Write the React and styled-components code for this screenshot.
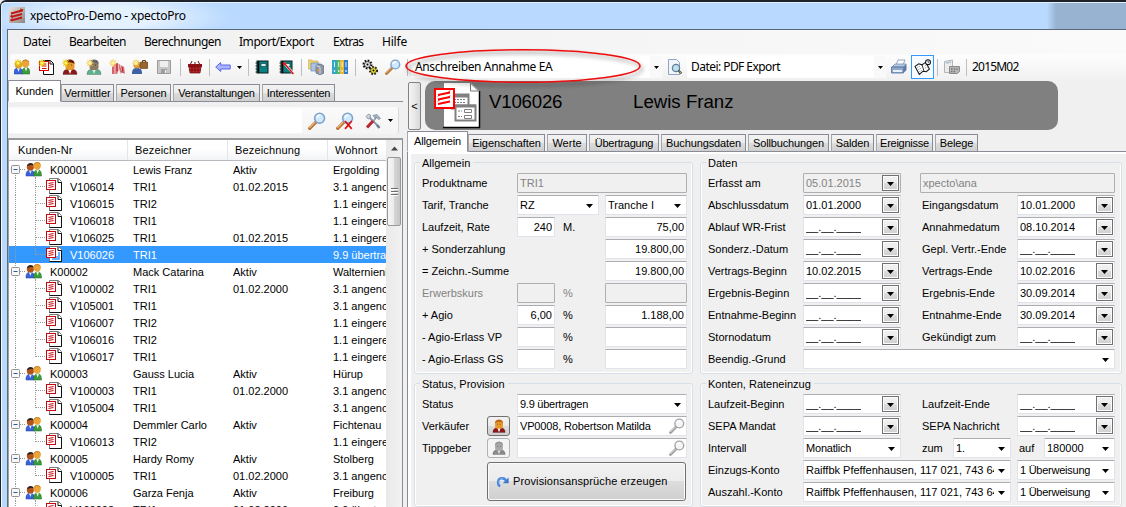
import React from 'react';
import styled, { createGlobalStyle, css } from 'styled-components';

const Global = createGlobalStyle`
  * { box-sizing: border-box; }
  body { margin: 0; overflow: hidden; background: #f0f0f0; }
`;
const sans = '"Liberation Sans", Arial, sans-serif';
const ui = '"Noto Sans", "Open Sans", sans-serif';

/* ---------- window frame ---------- */
const Window = styled.div`
  width: 1126px; height: 507px; overflow: hidden; display: flex; flex-direction: column;
  background: #b9d9fe; border-top: 2px solid #1d222b; border-left: 1px solid #20242c;
  border-top-left-radius: 6px; font: 11px ${sans}; color: #000; white-space: nowrap;
`;
const TitleBar = styled.header`
  height: 27px; flex: none; display: flex; align-items: center; gap: 5px; padding: 0 0 2px 7px;
  border-top: 1px solid #e3f0ff; border-left: 1px solid #e3f0ff; border-top-left-radius: 5px;
  background:
    linear-gradient(90deg, transparent 1045px, #98b3d2 1054px),
    radial-gradient(ellipse 125px 26px at 105px 14px, #e4f1ff 40%, transparent 100%),
    #b9d9fe;
  font: 12px ${ui}; letter-spacing: -0.25px;
`;
const Body = styled.div`
  flex: 1; min-height: 0; display: flex; flex-direction: column;
  margin-left: 6px; border-left: 1px solid #5e6b7a; border-top: 1px solid #59697b; background: #f0f0f0;
  box-shadow: -5px 0 0 #bad9fd, -6px 0 0 #eef6ff;
`;
const MenuBar = styled.nav`
  height: 24px; flex: none; display: flex; align-items: center; padding: 0 0 2px 15px;
  background: linear-gradient(90deg, #f0f0f0, #f5f5f5 50%, #fafafa);
  font: 12px ${ui};
`;
const MenuItem = styled.span`
  width: ${p => p.$w}px; letter-spacing: ${p => p.$ls || 0}px;
`;
const ToolBar = styled.div`
  position: relative; height: 26px; flex: none; display: flex; align-items: center; margin-left: 2px;
  background: linear-gradient(#fdfdfd, #f7f7f7 55%, #f0f0f0);
  border-top-left-radius: 3px; font: 12px ${ui};
`;
const Tool = styled.span`
  width: ${p => p.$w || 24}px; height: 24px; flex: none; display: flex; align-items: center; justify-content: center;
  ${p => p.$on && css`border: 1px solid #3399ff; background: #f8fbff;`}
`;
const Sep = styled.i`
  width: 1px; height: 17px; flex: none; background: #bdbdbd; margin: 0 ${p => p.$r || 0}px 0 ${p => p.$l || 0}px;
`;
const ToolCombo = styled.div`
  width: ${p => p.$w}px; height: 22px; flex: none; display: flex; align-items: center; justify-content: space-between;
  background: #fff; padding-left: 4px; margin-left: ${p => p.$l || 0}px;
`;
const ToolText = styled.span`
  letter-spacing: ${p => p.$ls}px; padding-bottom: 2px;
`;
const ComboDrop = styled.span`
  width: 12px; height: 22px; display: flex; align-items: center; justify-content: center; background: #f9f9f9;
`;
const Annotation = styled.svg`
  position: absolute; left: 390px; top: -10px; pointer-events: none;
`;
const Split = styled.div`flex: 1; min-height: 0; display: flex;`;

/* ---------- tabs ---------- */
const Tabs = styled.div`
  height: ${p => p.$h}px; flex: none; display: flex; align-items: flex-end;
  box-shadow: inset 0 -1px 0 #898c95;
`;
const Tab = styled.span`
  height: ${p => (p.$on ? '100%' : '18px')}; width: ${p => p.$w}px; flex: none; margin-right: ${p => (p.$on ? 0 : 2)}px;
  display: flex; align-items: center; justify-content: center; letter-spacing: ${p => p.$ls || 0}px;
  border: 1px solid #898c95; border-left-color: #a6a8b0;
  background: ${p => (p.$on ? '#fff' : 'linear-gradient(#f2f2f2, #ebebeb 50%, #dcdcdc 52%, #cfcfcf)')};
  ${p => p.$on && css`border-bottom-color: #fff; padding-bottom: ${p.$pb}px;`}
`;

/* ---------- left panel ---------- */
const Left = styled.section`width: 395px; flex: none; display: flex; flex-direction: column;`;
const SearchRow = styled.div`
  height: 27px; width: 391px; flex: none; margin: 5px 0 4px; display: flex; align-items: center; padding-left: 1px;
  background: linear-gradient(#fafafa, #f4f4f4); border-right: 1px solid #d8d8d8; border-radius: 0 3px 3px 0;
`;
const SearchInput = styled.div`width: 293px; height: 24px; background: #fff;`;
const TreeBox = styled.div`
  flex: 1; min-height: 0; display: flex; border: 1px solid #8a8d93; border-top: 2px solid #9a9a9a; border-left-color: #a0a0a0; border-bottom: 0;
  background: #fff;
`;
const Tree = styled.div`width: 377px; overflow: hidden; flex: none;`;
const treeCols = css`display: grid; grid-template-columns: 124px 100px 100px 100px; align-items: center;`;
const TreeHead = styled.div`
  ${treeCols} height: 21px; background: linear-gradient(#fff 45%, #f3f4f6); border-bottom: 1px solid #b8babf;
  grid-template-columns: 119px 100px 100px 100px; letter-spacing: 0.15px;
`;
const HeadCell = styled.span`height: 100%; padding: 4px 0 0 ${p => p.$p || 7}px; border-right: 1px solid #e2e5ea;`;
const TreeRow = styled.div`
  ${treeCols} height: 17px; ${p => p.$sel && css`background: #3399ff; color: #fff;`}
`;
const NodeCell = styled.span`display: flex; align-items: center; svg { flex: none; }`;
const Scroll = styled.div`
  flex: 1; background: linear-gradient(90deg, #e9e9e9, #f2f2f2); display: flex; flex-direction: column; align-items: center;
`;
const ScrollUp = styled.span`height: 17px; display: flex; align-items: center;`;
const Thumb = styled.span`
  width: 14px; height: 69px; border: 1px solid #989898; border-radius: 2px;
  background: linear-gradient(90deg, #f6f6f6, #ececec 48%, #d6d6d6 52%, #c6c6c6);
  display: flex; flex-direction: column; align-items: center; justify-content: center; gap: 1px;
`;
const Grip = styled.i`width: 7px; height: 2px; background: #6d6d6d; border-bottom: 1px solid #fff;`;

/* ---------- right panel ---------- */
const Right = styled.section`flex: 1; min-width: 0; margin-left: 4px; display: flex; flex-direction: column;`;
const Banner = styled.div`height: 51px; flex: none; display: flex; padding: 1px 0 1px;`;
const Collapse = styled.span`
  width: 13px; height: 48px; margin: 1px 4px 0 1px; border: 1px solid #828282; border-radius: 2px;
  background: linear-gradient(90deg, #f4f4f4, #e8e8e8 50%, #d8d8d8);
  display: flex; align-items: center; justify-content: center;
`;
const BannerBar = styled.div`
  width: 633px; height: 49px; border-radius: 10px; background: #808080; display: flex; padding-left: 9px;
  font-size: 18.67px; line-height: 41px;
`;
const BannerId = styled.span`width: 144px; margin-left: 7px; letter-spacing: -0.2px;`;
const Page = styled.div`
  flex: 1; min-height: 0; border-left: 1px solid #898c95; background: #f0f0f0;
  box-shadow: inset 3px 0 0 #fff, inset 0 2px 0 #fff; padding: 4px 4px 0 6px; display: flex; gap: 7px;
`;
const Column = styled.div`width: ${p => p.$w}px; flex: none; display: flex; flex-direction: column;`;
const Group = styled.fieldset`
  margin: 0; min-width: 0; height: ${p => p.$h}px; border: 1px solid #d5dfe5; border-radius: 3px;
  box-shadow: inset 1px 0 0 #fff, inset -1px 0 0 #fff, inset 0 -1px 0 #fff; padding: ${p => p.$t}px 5px 0 7px;
  margin-bottom: ${p => p.$b || 0}px;
`;
const Legend = styled.legend`padding: 0 3px 0 2px; margin-left: -2px; height: 13px; line-height: 15px;`;
const Row = styled.div`height: 22px; display: flex; align-items: flex-start; color: ${p => (p.$off ? '#838383' : '#000')};`;
const Label = styled.span`
  width: ${p => p.$w || 95}px; flex: none; line-height: 20px; letter-spacing: ${p => p.$ls || 0}px; padding-left: ${p => p.$p || 0}px;
`;
const Field = styled.span`
  width: ${p => p.$w}px; height: 20px; flex: none; margin-left: ${p => p.$l || 0}px;
  display: flex; align-items: center; justify-content: ${p => (p.$num ? 'flex-end' : 'space-between')};
  padding: 0 ${p => (p.$num ? 2 : 1)}px 0 2px; background: #fff; overflow: hidden;
  border: 1px solid #e2e3ea; border-top-color: #abadb3; border-radius: 1px;
  ${p => p.$off && css`background: #f0f0f0; border-color: #afafaf; color: #838383;`}
  svg { flex: none; }
`;
const FieldText = styled.span`overflow: hidden; letter-spacing: ${p => p.$ls || 0}px;`;
const DateButton = styled.span`
  width: 17px; height: 16px; border: 1px solid #707070; box-shadow: inset 0 0 0 1px #fcfcfc;
  background: linear-gradient(#f2f2f2, #ebebeb 50%, #dddddd 50%, #cfcfcf);
  display: flex; align-items: center; justify-content: center; flex: none; padding-top: 2px;
`;
const ArrowWrap = styled.span`width: 15px; height: 16px; display: flex; align-items: center; justify-content: center; flex: none; padding-top: 1px;`;
const MiniButton = styled.span`
  width: 23px; height: 20px; flex: none; margin-right: 7px; border: 1px solid ${p => (p.$off ? '#adb2b5' : '#707070')}; border-radius: 3px;
  background: ${p => (p.$off ? '#f4f4f4' : 'linear-gradient(#f2f2f2, #ebebeb 50%, #dddddd 50%, #cfcfcf)')};
  display: flex; align-items: center; justify-content: center;
`;
const BigButton = styled.span`
  width: 199px; height: 39px; margin: 2px 0 0 65px; border: 1px solid #707070; border-radius: 3px; box-shadow: inset 0 0 0 1px #fafafa;
  background: linear-gradient(#f2f2f2, #ebebeb 50%, #dddddd 50%, #cfcfcf);
  display: flex; align-items: center; gap: 4px; padding: 0 0 1px 8px; letter-spacing: 0.12px;
`;

/* ---------- icons ---------- */
const Ico = ({ s = 16, children, ...r }) => <svg width={s} height={s} viewBox="0 0 16 16" {...r}>{children}</svg>;
const Arrow = () => <svg width="7" height="4" viewBox="0 0 7 4"><path d="M0 0h7L3.5 4z" /></svg>;
const SmallArrow = () => <svg width="5" height="3" viewBox="0 0 5 3"><path d="M0 0h5L2.5 3z" /></svg>;
const Star = () => (
  <g stroke="#e8c400" strokeWidth="1.1">
    <path d="M4 .3v7.4M.3 4h7.4M1.4 1.4l5.2 5.2M6.6 1.4L1.4 6.6" />
    <circle cx="4" cy="4" r="1.5" fill="#fff46b" stroke="none" />
  </g>
);
const PalStar = () => (
  <g stroke="#f3c75b" strokeWidth="1.1">
    <path d="M4 .3v7.4M.3 4h7.4M1.4 1.4l5.2 5.2M6.6 1.4L1.4 6.6" />
    <circle cx="4" cy="4" r="1.8" fill="#fff7a0" stroke="none" />
  </g>
);
const Pair = ({ l, r }) => (
  <>
    <path d="M0 15c-.3-4 1-6 4-6s5 1.500 5 6z" fill="#3a62d8" stroke="#2345a0" strokeWidth=".5" />
    <path d="M8 15c-.3-4 1-6.500 4-6.500s4 2.500 4 6.500z" fill="#3a9a3c" stroke="#24702a" strokeWidth=".5" />
    <path d="M3 9l1.500 4L6 9z" fill="#dfe9ff" /><path d="M10.500 8.500l1.500 4 1.500-4z" fill="#e5f6dc" />
    <circle cx="4.500" cy="5.700" r="3.700" fill={l} /><circle cx="11.500" cy="4.500" r="3.800" fill={r} />
    <path d="M8.500 2.500c1.500-2 5-2 6.500.5" fill="none" stroke="#b8781c" />
  </>
);
const Users = () => <><Pair l="#b0541c" r="#eda437" /><path d="M1 5c0-4 6-5 7-1-2-1-5-.5-7 1z" fill="#2c2320" /></>;
const NewUsers = () => <Ico><Pair l="#d9a030" r="#eda437" /><Star /></Ico>;
const NewDoc = () => (
  <Ico><path d="M5.500 1.500h7l3 3v11h-10z" fill="#fff" stroke="#111" /><path d="M12 2v3h3" fill="none" stroke="#111" />
    <rect x="1.500" y="2.500" width="9" height="9" fill="#fff" stroke="#d00" /><path d="M4 5h4.500M4 7h4.500M4 9.500h4.500" stroke="#d00" /><Star /></Ico>
);
const Person = ({ head, body, hair, shirt = '#fff' }) => (
  <><path d="M1 15.500c0-4 2-5.500 7-5.500s7 1.500 7 5.500z" fill={body} stroke="#0005" strokeWidth=".6" />
    <path d="M6 10l2 5 2-5z" fill={shirt} />
    <rect x="3.500" y="1" width="9" height="10" rx="3" fill={head} /><path d="M3.500 5c0-6 9-6 9 0-2-2-7-2-9 0z" fill={hair} />
    <path d="M6 6h1M9 6h1" stroke="#0008" /></>
);
const NewPerson = () => <Ico><Person head="#e79a2b" body="#8c1719" hair="#5c1a10" /><Star /></Ico>;
const NewContact = () => <Ico><Person head="#8f7a62" body="#5fae8c" hair="#5f6468" shirt="#d9f1e4" /><PalStar /></Ico>;
const NewTent = () => (
  <Ico><path d="M3 15V8l5-4 7 4 1 7-3-2-1 2-2-5-2 5z" fill="#d9656b" /><path d="M6 7v8M9 5l1 6M11 6l3 7" stroke="#f6cfd0" />
    <path d="M8 4v8M13 8l1 6" stroke="#a02a35" /><PalStar /></Ico>
);
const NewAgent = () => (
  <Ico><path d="M0 15c0-4 1-6 5-6s5 2 5 6z" fill="#3c62a5" /><circle cx="5" cy="6" r="3.500" fill="#d8913b" />
    <rect x="8" y="3" width="8" height="6.500" rx="1" fill="#9a6630" stroke="#5e3c18" strokeWidth=".6" /><path d="M10.500 3V1.500h3V3" fill="none" stroke="#5e3c18" /><PalStar /></Ico>
);
const Disk = () => (
  <Ico><path d="M1.500 1.500h13v13h-13z" fill="#c6c6c6" stroke="#9b9b9b" /><path d="M4 2h8v6H4z" fill="#eee" /><path d="M5 10h6v4H5z" fill="#9e9e9e" /><path d="M9 11h1.500v3H9z" fill="#eee" /></Ico>
);
const Basket = () => (
  <Ico><path d="M3 6l2-4M8 6V3M13 6l-2-4" stroke="#6b0d10" /><path d="M1 5h14v3H1z" fill="#8a1216" /><path d="M2 8h12l-1 6H3z" fill="#c7272c" stroke="#6b0d10" strokeWidth=".7" />
    <path d="M5 8v6M8 8v6M11 8v6M2 11h12" stroke="#600a0d" strokeWidth=".8" /></Ico>
);
const Back = () => <Ico><path d="M.7 8l5-4.500V6h9.500v4H5.700v2.500z" fill="#a9b4ff" stroke="#5a67e8" /></Ico>;
const Book = ({ crossed }) => (
  <Ico><rect x="3" y="2" width="11" height="12" fill="#0b8080" stroke="#0c1f22" /><path d="M4.500 2v12" stroke="#000" strokeWidth="1.500" />
    <path d="M1.500 4h3M1.500 7h3M1.500 10h3M1.500 13h3" stroke="#222" /><path d="M7 4.500h5v3H7z" fill="#d9f0ee" stroke="#033" strokeWidth=".6" />
    {crossed && <><path d="M6 4l9 10" stroke="#fff" strokeWidth="2.600" /><path d="M6 4l9.500 11" stroke="#e01414" strokeWidth="1.500" /><path d="M4.500 3l4 1-3 3z" fill="#e01414" /></>}</Ico>
);
const Folders = () => (
  <Ico><path d="M0 1h4l1 1h5v8H0z" fill="#f0d372" stroke="#c9a544" strokeWidth=".6" /><rect x="3" y="4" width="8" height="8" fill="#a9c3e6" stroke="#5c7dac" strokeWidth=".6" />
    <path d="M8 6l5-1 3 2v7l-4 2-4-2z" fill="#8a96a5" stroke="#596270" strokeWidth=".6" /><path d="M8 6.500l4 1.500v7" fill="none" stroke="#d5dbe2" /><circle cx="10" cy="11" r="1.300" fill="#e38b3b" /></Ico>
);
const Binders = () => (
  <Ico><rect x="0" y="1" width="5" height="14" fill="#34a6c8" /><rect x="5" y="1" width="3.500" height="14" fill="#5fb84e" /><rect x="8.500" y="1" width="3.500" height="14" fill="#f0b429" /><rect x="12" y="1" width="4" height="14" fill="#2f7dc6" />
    <path d="M2.500 3v5M6.700 3v5M10.200 3v5M14 3v5" stroke="#ffffffcc" strokeWidth="1" /><path d="M2.500 11v2M6.700 11v2M10.200 11v2M14 11v2" stroke="#eee" strokeWidth="1.300" /></Ico>
);
const Gears = () => (
  <Ico><circle cx="5.500" cy="5.500" r="3.500" fill="#ddd" stroke="#111" strokeWidth="3" strokeDasharray="1.500 1.200" /><circle cx="5.500" cy="5.500" r="3" fill="#ddd" stroke="#111" strokeWidth=".6" /><circle cx="5.500" cy="5.500" r="1" />
    <circle cx="11.500" cy="11.500" r="3.200" fill="#f0e21a" stroke="#222" strokeWidth="2.800" strokeDasharray="1.500 1.200" /><circle cx="11.500" cy="11.500" r="2.700" fill="#f4e830" stroke="#222" strokeWidth=".5" /><circle cx="11.500" cy="11.500" r="1" /></Ico>
);
const Lens = ({ s = 16, gray, children }) => (
  <Ico s={s}><path d="M1.500 14.500l5.500-5.500" stroke={gray ? '#a0a0a0' : '#b87333'} strokeWidth="2.800" strokeLinecap="round" /><path d="M1.300 14l5-5" stroke={gray ? '#ddd' : '#f2bd83'} strokeWidth="1" />
    <circle cx="10.300" cy="5.500" r="4.400" fill={gray ? '#f5f5f5' : '#cfe8fb'} stroke={gray ? '#a6a6a6' : '#7ba3cc'} strokeWidth="1.400" /><path d="M8 5c.3-1.500 1.500-2.300 3-2" stroke="#fff" strokeWidth="1.400" fill="none" />{children}</Ico>
);
const Tools = () => (
  <Ico><path d="M4 4l9 9" stroke="#8b98aa" strokeWidth="2" /><path d="M1 3.500L3.500 1l2 1v3L3 6z" fill="#c8d0dc" stroke="#79869a" strokeWidth=".7" /><path d="M12 12l2.500 3" stroke="#6f7d91" strokeWidth="2.500" />
    <path d="M8 8l-6 6.500" stroke="#b9282e" strokeWidth="3" /><path d="M8.500 8l3-4" stroke="#8b98aa" strokeWidth="1.600" /><path d="M8 2.500l4-1 3.500 4-2 1-1.500-2-2 .5z" fill="#aab5c5" stroke="#677589" strokeWidth=".6" /></Ico>
);
const Preview = () => (
  <Ico><path d="M1.500 .5h8l3 3v12h-11z" fill="#f2f6fb" stroke="#8ea6c4" /><circle cx="9" cy="9" r="3.600" fill="#bfe0ef" stroke="#5f7f9c" strokeWidth="1.300" /><path d="M11.500 11.500l3 3" stroke="#4d5866" strokeWidth="2.200" /><path d="M12.500 12.500l2.500 2.500" stroke="#d7a33e" strokeWidth="1" /></Ico>
);
const Printer = () => (
  <Ico><path d="M5 6l2-5h7l-2 5z" fill="#fdfdff" stroke="#7c93b6" strokeWidth=".8" /><path d="M1 8l3-3h11l-2 3z" fill="#b9cbe4" stroke="#6582ab" strokeWidth=".7" /><path d="M.5 8h12v6H.5z" fill="#8fa9cd" stroke="#4e6d99" strokeWidth=".8" /><path d="M12.500 8l3-3v6l-3 3z" fill="#5e7ba6" /><path d="M2 11h9v2H2z" fill="#e9f0fa" /></Ico>
);
const Notebook = () => (
  <Ico s={17}><path d="M1 7l3.500-2.500L7.500 5.500 11 3l3.500 6.500L11.500 12l-3-.5L5 14.500z" fill="#fff" stroke="#111" /><path d="M7.500 5.500l2 6" stroke="#111" strokeWidth=".8" /><path d="M3 8l3-1.500M4 10l3-1.500M5 12l2.500-1.500M10 6.500l2-1M10.500 8.500l2.500-1" stroke="#777" strokeWidth=".8" strokeDasharray="1 .7" /><circle cx="13.200" cy="3" r="2.300" fill="#fff" stroke="#111" /><path d="M13.200 1.500V3h1" fill="none" stroke="#111" strokeWidth=".7" /></Ico>
);
const Clip = () => (
  <Ico><path d="M.5 2.500l8-1.500v12.500H.5z" fill="#ececec" stroke="#b5b5b5" /><path d="M2 4l5-1" stroke="#a8c0dd" strokeWidth="1.500" /><path d="M5.500 7.500h10v5l-2 2h-8z" fill="#b7b7b7" stroke="#8a8a8a" /><path d="M7 10h1.500M9.700 10h1.500M12.300 10h1.500M7 12.500h1.500M9.700 12.500h1.500" stroke="#777" strokeWidth="1.300" /></Ico>
);
const AppIcon = () => (
  <svg width="16" height="16" viewBox="0 0 16 16"><defs><linearGradient id="ap" x1="0" x2="1" y2="1"><stop stopColor="#e9e4df" /><stop offset="1" stopColor="#8c8580" /></linearGradient></defs>
    <rect width="16" height="16" fill="url(#ap)" /><path d="M2 6.500l11-3M2 10l11-3M2 13.500l11-3" stroke="#c01818" strokeWidth="2" /><path d="M11 2l3 .8-1.500 2M3.500 8L1 9.500M3.500 11.500L1 13.500" stroke="#c01818" fill="none" /></svg>
);
const ContractArt = () => (
  <svg width="48" height="49" viewBox="0 0 48 49">
    <path d="M10 2h27l8 8v36H10z" fill="#fff" /><path d="M45.500 10v36.500H9" fill="none" stroke="#000" strokeWidth="1.500" /><path d="M36.500 2v8h8z" fill="#fff" stroke="#777" />
    <rect x="17.500" y="13.500" width="17" height="14" fill="#fff" stroke="#808080" strokeWidth="2" /><path d="M17 15h18" stroke="#808080" strokeWidth="3" /><path d="M20 18.500h12M20 21.500h12" stroke="#808080" strokeDasharray="2 1" />
    <rect x="21.500" y="24.500" width="20" height="15" fill="#fff" stroke="#808080" strokeWidth="2" /><path d="M21 25h21" stroke="#808080" strokeWidth="3" />
    <path d="M24 30h4M24 35.500h4" stroke="#808080" strokeDasharray="2 1" /><path d="M30.500 28.500h7v3h-7zM30.500 34.500h7v3h-7z" fill="#fff" stroke="#808080" />
    <rect x="1" y="8" width="19" height="19" fill="#fff" stroke="#f00" strokeWidth="2" /><path d="M4 14l12-2.500M4 18.500l12-2.500M4 23l12-2.500" stroke="#f00" strokeWidth="1.800" /><path d="M14 12l2-2.500M14 16.500l2-2M6 13.500l-2 2M6 18.500l-2 2" stroke="#f00" />
  </svg>
);
const Refresh = () => (
  <Ico s={13}><path d="M5 14C1 11 2 4 7.500 4c2.500 0 4 1.500 4.500 3" fill="none" stroke="#4a86dc" strokeWidth="3" /><path d="M15.500 3v7h-7z" fill="#3a76d0" /><path d="M4 11C3 7 5 4.500 8 4.500" stroke="#a8cbf7" fill="none" /></Ico>
);

/* ---------- tree ---------- */
const RootGutter = ({ first }) => (
  <svg width="41" height="17" viewBox="0 0 41 17">
    <path d={`M6.500 ${first ? 8 : 0}v17`} stroke="#999" strokeDasharray="1 1" /><path d="M11 8.500h6" stroke="#999" strokeDasharray="1 1" /><path d="M26.500 14v3" stroke="#999" strokeDasharray="1 1" />
    <rect x="2.500" y="4.500" width="8" height="8" rx="1" fill="#f7f7f7" stroke="#919191" /><path d="M4.500 8.500h4" stroke="#2c5aa8" />
    <g transform="translate(17 .5) scale(.97)"><Users /></g>
  </svg>
);
const ChildGutter = ({ last, sel }) => (
  <svg width="61" height="17" viewBox="0 0 61 17">
    <path d="M6.500 0v17" stroke="#999" strokeDasharray="1 1" /><path d={`M26.500 0v${last ? 9 : 17}`} stroke="#999" strokeDasharray="1 1" /><path d="M27 8.500h10" stroke="#999" strokeDasharray="1 1" />
    <path d="M40.500 .5h9l3 3v12h-12z" fill="#fff" stroke="#7a7a7a" /><path d="M49 1v3.500h3.500v11h-12" fill="none" stroke="#111" />
    {sel && <path d="M43 13h7V6M46 11h3" stroke="#3399ff" strokeWidth="1.500" fill="none" />}
    <rect x="37.500" y="2.500" width="9" height="9" fill="#fff" stroke="#c8040d" /><path d="M39.500 5.500l5-1M39.500 7.500l5-1M39.500 9.500l5-1" stroke="#c8040d" />
  </svg>
);
const A = '3.1 angenommen', E = '1.1 eingereicht', U = '9.9 übertragen', D15 = '01.02.2015', D00 = '01.02.2000';
const tree = [
  ['K00001', 'Lewis Franz', 'Ergolding', [['V106014', 'TRI1', D15, A], ['V106015', 'TRI2', '', E], ['V106018', 'TRI1', '', E], ['V106025', 'TRI1', D15, E], ['V106026', 'TRI1', '', U]]],
  ['K00002', 'Mack Catarina', 'Walternienburg', [['V100002', 'TRI1', D00, A], ['V105001', 'TRI1', '', A], ['V106007', 'TRI2', '', E], ['V106016', 'TRI2', '', E], ['V106017', 'TRI1', '', E]]],
  ['K00003', 'Gauss Lucia', 'Hürup', [['V100003', 'TRI1', D00, A], ['V105004', 'TRI1', '', A]]],
  ['K00004', 'Demmler Carlo', 'Fichtenau', [['V106013', 'TRI2', '', E]]],
  ['K00005', 'Hardy Romy', 'Stolberg', [['V100005', 'TRI1', D00, A]]],
  ['K00006', 'Garza Fenja', 'Freiburg', [['V100008', 'TRI1', D00, U]]],
];

/* ---------- form parts ---------- */
const Indent = styled.span`margin-left: 21px;`;
const DateField = ({ v, l, off, w = 98 }) => (
  <Field $w={w} $l={l} $off={off}><FieldText>{v || '__.__.____'}</FieldText><DateButton><Arrow /></DateButton></Field>
);
const Combo = ({ v, w, l, ls }) => <Field $w={w} $l={l}><FieldText $ls={ls}>{v}</FieldText><ArrowWrap><Arrow /></ArrowWrap></Field>;
const Num = ({ v, w, l, off }) => <Field $w={w} $l={l} $num $off={off}>{v}</Field>;
const DateRow = ({ a, av, b, bv }) => (
  <Row><Label>{a}</Label><DateField v={av} /><Label $w={95}><Indent>{b}</Indent></Label><DateField v={bv} l={21} /></Row>
);
const AmountRow = ({ label, pct, amount, off, unit = '%' }) => (
  <Row $off={off}><Label>{label}</Label><Num w={38} v={pct} off={off} /><Label $w={50} $p={8}>{unit}</Label><Num w={82} v={amount} off={off} /></Row>
);

export default function App() {
  return (
    <>
      <Global />
      <Window>
        <TitleBar><AppIcon />xpectoPro-Demo - xpectoPro</TitleBar>
        <Body>
          <MenuBar>
            <MenuItem $w={46} $ls={-0.4}>Datei</MenuItem><MenuItem $w={75} $ls={-0.5}>Bearbeiten</MenuItem><MenuItem $w={95} $ls={-0.5}>Berechnungen</MenuItem>
            <MenuItem $w={94} $ls={-0.45}>Import/Export</MenuItem><MenuItem $w={49} $ls={-0.7}>Extras</MenuItem><MenuItem $ls={-0.2}>Hilfe</MenuItem>
          </MenuBar>
          <ToolBar>
            <Tool><NewUsers /></Tool><Tool><NewDoc /></Tool><Tool><NewPerson /></Tool><Tool $w={23}><NewContact /></Tool><Tool $w={23}><NewTent /></Tool><Tool><NewAgent /></Tool><Tool><Disk /></Tool>
            <Sep $l={4} $r={2} /><Tool><Basket /></Tool><Sep $l={2} $r={1} /><Tool $w={23}><Back /></Tool><Tool $w={11}><SmallArrow /></Tool><Sep $l={3} $r={1} />
            <Tool><Book /></Tool><Tool><Book crossed /></Tool><Sep $l={3} $r={2} /><Tool><Folders /></Tool><Tool><Binders /></Tool><Sep $l={3} $r={2} />
            <Tool $w={23}><Gears /></Tool><Tool><Lens /></Tool><Sep $l={2} />
            <ToolCombo $w={251} $l={3}><ToolText $ls={-0.37}>Anschreiben Annahme EA</ToolText><ComboDrop><SmallArrow /></ComboDrop></ToolCombo>
            <Tool $w={25}><Preview /></Tool>
            <ToolCombo $w={199}><ToolText $ls={-0.55}>Datei: PDF Export</ToolText><ComboDrop><SmallArrow /></ComboDrop></ToolCombo>
            <Tool $w={25}><Printer /></Tool><Tool $w={23} $on><Notebook /></Tool><Sep $l={3} $r={2} /><Tool><Clip /></Tool><Sep $l={2} $r={5} /><ToolText $ls={-0.8}>2015M02</ToolText>
            <Annotation width="246" height="46">
              <defs><filter id="sh" x="-10%" y="-20%" width="125%" height="160%"><feDropShadow dx="2" dy="3" stdDeviation="2" floodOpacity=".45" /></filter></defs>
              <ellipse cx="123" cy="22" rx="117" ry="16.300" fill="none" stroke="#ec0c0c" strokeWidth="1.600" filter="url(#sh)" />
            </Annotation>
          </ToolBar>
          <Split>
            <Left>
              <Tabs $h={22}>
                <Tab $on $pb={0} $w={53}>Kunden</Tab><Tab $w={53}>Vermittler</Tab><Tab $w={55} $ls={-0.15}>Personen</Tab><Tab $w={87} $ls={-0.2}>Veranstaltungen</Tab><Tab $w={73} $ls={-0.25}>Interessenten</Tab>
              </Tabs>
              <SearchRow>
                <SearchInput /><Tool $w={30}><Lens s={18} /></Tool><Tool $w={26}><Lens s={18}><path d="M8 8l6 7M14 8l-6 7" stroke="#e01010" strokeWidth="1.500" /></Lens></Tool><Tool $w={30}><Tools /></Tool><SmallArrow />
              </SearchRow>
              <TreeBox>
                <Tree>
                  <TreeHead><HeadCell $p={9}>Kunden-Nr</HeadCell><HeadCell>Bezeichner</HeadCell><HeadCell>Bezeichnung</HeadCell><HeadCell>Wohnort</HeadCell></TreeHead>
                  {tree.map(([id, name, city, kids], i) => (
                    <React.Fragment key={id}>
                      <TreeRow><NodeCell><RootGutter first={i === 0} />{id}</NodeCell><span>{name}</span><span>Aktiv</span><span>{city}</span></TreeRow>
                      {kids.map((k, j) => (
                        <TreeRow key={k[0]} $sel={k[0] === 'V106026'}>
                          <NodeCell><ChildGutter last={j === kids.length - 1} sel={k[0] === 'V106026'} />{k[0]}</NodeCell><span>{k[1]}</span><span>{k[2]}</span><span>{k[3]}</span>
                        </TreeRow>
                      ))}
                    </React.Fragment>
                  ))}
                </Tree>
                <Scroll><ScrollUp><Ico s={7} viewBox="0 0 7 4"><path d="M0 4h7L3.500 0z" fill="#444" /></Ico></ScrollUp><Thumb><Grip /><Grip /><Grip /></Thumb></Scroll>
              </TreeBox>
            </Left>
            <Right>
              <Banner><Collapse>&lt;</Collapse><BannerBar><ContractArt /><BannerId>V106026</BannerId>Lewis Franz</BannerBar></Banner>
              <Tabs $h={21}>
                <Tab $on $pb={2} $w={61} $ls={-0.15}>Allgemein</Tab><Tab $w={77} $ls={-0.1}>Eigenschaften</Tab><Tab $w={40}>Werte</Tab><Tab $w={70} $ls={-0.25}>Übertragung</Tab><Tab $w={85} $ls={-0.12}>Buchungsdaten</Tab>
                <Tab $w={81} $ls={-0.15}>Sollbuchungen</Tab><Tab $w={43} $ls={-0.1}>Salden</Tab><Tab $w={57} $ls={-0.25}>Ereignisse</Tab><Tab $w={43} $ls={-0.15}>Belege</Tab>
              </Tabs>
              <Page>
                <Column $w={279}>
                  <Group $h={218} $t={4} $b={3}><Legend>Allgemein</Legend>
                    <Row><Label>Produktname</Label><Field $w={170} $off>TRI1</Field></Row>
                    <Row><Label>Tarif, Tranche</Label><Combo w={82} v="RZ" /><Combo w={82} l={6} v="Tranche I" /></Row>
                    <AmountRow label="Laufzeit, Rate" pct="240" unit="M." amount="75,00" />
                    <Row><Label $w={183}>+ Sonderzahlung</Label><Num w={82} v="19.800,00" /></Row>
                    <Row><Label $w={183}>= Zeichn.-Summe</Label><Num w={82} v="19.800,00" /></Row>
                    <AmountRow label="Erwerbskurs" off />
                    <AmountRow label="+ Agio" pct="6,00" amount="1.188,00" />
                    <AmountRow label="- Agio-Erlass VP" />
                    <AmountRow label="- Agio-Erlass GS" />
                  </Group>
                  <Group $h={130} $t={4}><Legend>Status, Provision</Legend>
                    <Row><Label>Status</Label><Combo w={170} v="9.9 übertragen" ls={-0.25} /></Row>
                    <Row><Label $w={65}>Verkäufer</Label><MiniButton><Ico s={14}><Person head="#e79a2b" body="#8c1719" hair="#b86818" /></Ico></MiniButton><Field $w={170}><FieldText $ls={-0.15}>VP0008, Robertson Matilda</FieldText><Lens gray /></Field></Row>
                    <Row><Label $w={65}>Tippgeber</Label><MiniButton $off><Ico s={14}><Person head="#aaa" body="#8a8a8a" hair="#999" shirt="#ddd" /></Ico></MiniButton><Field $w={170}><FieldText /><Lens gray /></Field></Row>
                    <BigButton><Refresh />Provisionsansprüche erzeugen</BigButton>
                  </Group>
                </Column>
                <Column $w={422}>
                  <Group $h={218} $t={4} $b={3}><Legend>Daten</Legend>
                    <Row><Label>Erfasst am</Label><DateField v="05.01.2015" off /><Field $w={195} $l={19} $off>xpecto\ana</Field></Row>
                    <DateRow a="Abschlussdatum" av="01.01.2000" b="Eingangsdatum" bv="10.01.2000" />
                    <DateRow a="Ablauf WR-Frist" b="Annahmedatum" bv="08.10.2014" />
                    <DateRow a="Sonderz.-Datum" b="Gepl. Vertr.-Ende" />
                    <DateRow a="Vertrags-Beginn" av="10.02.2015" b="Vertrags-Ende" bv="10.02.2016" />
                    <DateRow a="Ergebnis-Beginn" b="Ergebnis-Ende" bv="30.09.2014" />
                    <DateRow a="Entnahme-Beginn" b="Entnahme-Ende" bv="30.09.2014" />
                    <DateRow a="Stornodatum" b="Gekündigt zum" />
                    <Row><Label>Beendig.-Grund</Label><Combo w={312} v="" /></Row>
                  </Group>
                  <Group $h={130} $t={4}><Legend>Konten, Rateneinzug</Legend>
                    <DateRow a="Laufzeit-Beginn" b="Laufzeit-Ende" />
                    <DateRow a="SEPA Mandat" b="SEPA Nachricht" />
                    <Row><Label>Intervall</Label><Combo w={98} v="Monatlich" ls={-0.2} /><Label $w={52} $p={21}>zum</Label><Combo w={58} v="1." /><Label $w={33} $p={8}>auf</Label><Combo w={71} v="180000" /></Row>
                    <Row><Label>Einzugs-Konto</Label><Combo w={208} v="Raiffbk Pfeffenhausen, 117 021, 743 6473" /><Combo w={98} l={6} v="1 Überweisung" ls={-0.25} /></Row>
                    <Row><Label>Auszahl.-Konto</Label><Combo w={208} v="Raiffbk Pfeffenhausen, 117 021, 743 6473" /><Combo w={98} l={6} v="1 Überweisung" ls={-0.25} /></Row>
                  </Group>
                </Column>
              </Page>
            </Right>
          </Split>
        </Body>
      </Window>
    </>
  );
}
